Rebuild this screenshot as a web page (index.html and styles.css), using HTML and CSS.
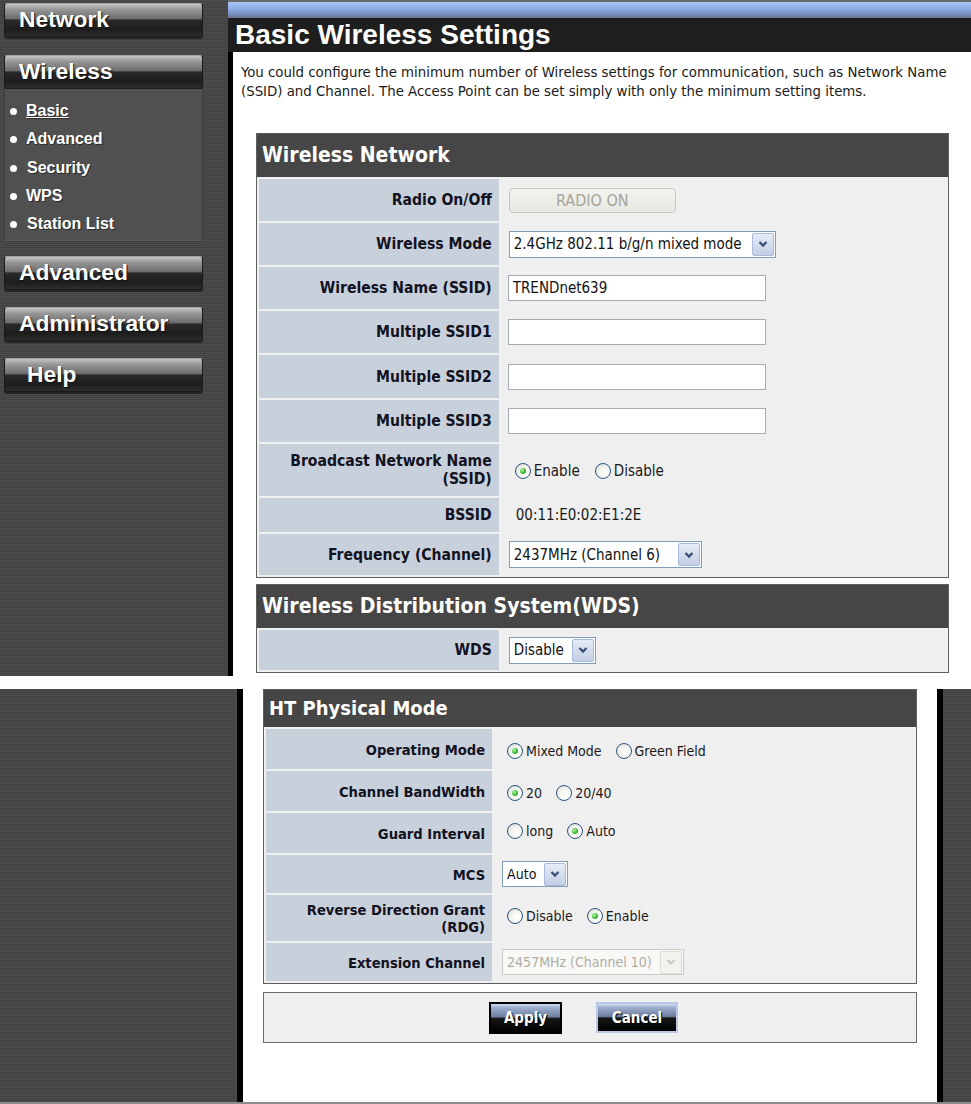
FILE: index.html
```html
<!DOCTYPE html>
<html>
<head>
<meta charset="utf-8">
<title>Basic Wireless Settings</title>
<link rel="stylesheet" href="styles.css">
</head>
<body>
<div class="screen screen-top">
  <nav class="sidebar stripes">
    <a class="navbtn">Network</a>
    <a class="navbtn gap-wireless">Wireless</a>
    <ul class="submenu">
      <li><a class="current">Basic</a></li>
      <li>Advanced</li>
      <li class="ind">Security</li>
      <li>WPS</li>
      <li class="ind">Station List</li>
    </ul>
    <a class="navbtn gap-adv">Advanced</a>
    <a class="navbtn gap-next">Administrator</a>
    <a class="navbtn gap-next help">Help</a>
  </nav>
  <main class="main">
    <div class="topbar"></div>
    <h1 class="title">Basic Wireless Settings</h1>
    <div class="content">
      <p class="intro">You could configure the minimum number of Wireless settings for communication, such as Network Name<br>(SSID) and Channel. The Access Point can be set simply with only the minimum setting items.</p>

      <section class="panel panel-wn">
        <h2 class="panel-head">Wireless Network</h2>
        <table class="form">
          <tr><th>Radio On/Off</th><td><span class="btn-disabled">RADIO ON</span></td></tr>
          <tr><th>Wireless Mode</th><td>
            <span class="select sel-mode"><span class="sel-text">2.4GHz 802.11 b/g/n mixed mode</span><span class="sel-btn"><svg width="10" height="8" viewBox="0 0 10 8"><path d="M1.5 2 L5 5.5 L8.5 2" fill="none" stroke="#3c4f74" stroke-width="2.4"/></svg></span></span>
          </td></tr>
          <tr><th>Wireless Name (SSID)</th><td><input class="text" type="text" value="TRENDnet639"></td></tr>
          <tr><th>Multiple SSID1</th><td><input class="text" type="text" value=""></td></tr>
          <tr class="r43"><th>Multiple SSID2</th><td><input class="text" type="text" value=""></td></tr>
          <tr><th>Multiple SSID3</th><td><input class="text" type="text" value=""></td></tr>
          <tr class="r52"><th>Broadcast Network Name<br>(SSID)</th><td>
            <span class="opts"><span class="opt"><span class="rd on"></span>Enable</span><span class="opt"><span class="rd"></span>Disable</span></span>
          </td></tr>
          <tr class="r34"><th>BSSID</th><td><span class="plain">00:11:E0:02:E1:2E</span></td></tr>
          <tr class="r41"><th>Frequency (Channel)</th><td>
            <span class="select sel-freq"><span class="sel-text">2437MHz (Channel 6)</span><span class="sel-btn"><svg width="10" height="8" viewBox="0 0 10 8"><path d="M1.5 2 L5 5.5 L8.5 2" fill="none" stroke="#3c4f74" stroke-width="2.4"/></svg></span></span>
          </td></tr>
        </table>
      </section>

      <section class="panel panel-wds">
        <h2 class="panel-head">Wireless Distribution System(WDS)</h2>
        <table class="form">
          <tr class="r40"><th>WDS</th><td>
            <span class="select sel-wds"><span class="sel-text">Disable</span><span class="sel-btn"><svg width="10" height="8" viewBox="0 0 10 8"><path d="M1.5 2 L5 5.5 L8.5 2" fill="none" stroke="#3c4f74" stroke-width="2.4"/></svg></span></span>
          </td></tr>
        </table>
      </section>
    </div>
  </main>
</div>

<div class="screen screen-bottom">
  <div class="sidebar-blank stripes"></div>
  <div class="content2">
    <section class="panel panel-ht">
      <h2 class="panel-head">HT Physical Mode</h2>
      <table class="form form-ht">
        <tr><th>Operating Mode</th><td><span class="opts"><span class="opt"><span class="rd on"></span>Mixed Mode</span><span class="opt"><span class="rd"></span>Green Field</span></span></td></tr>
        <tr><th>Channel BandWidth</th><td><span class="opts"><span class="opt"><span class="rd on"></span>20</span><span class="opt"><span class="rd"></span>20/40</span></span></td></tr>
        <tr><th>Guard Interval</th><td><span class="opts"><span class="opt"><span class="rd"></span>long</span><span class="opt"><span class="rd on"></span>Auto</span></span></td></tr>
        <tr class="r38"><th>MCS</th><td>
          <span class="select sel-mcs"><span class="sel-text">Auto</span><span class="sel-btn"><svg width="10" height="8" viewBox="0 0 10 8"><path d="M1.5 2 L5 5.5 L8.5 2" fill="none" stroke="#3c4f74" stroke-width="2.4"/></svg></span></span>
        </td></tr>
        <tr class="r46"><th>Reverse Direction Grant<br>(RDG)</th><td><span class="opts"><span class="opt"><span class="rd"></span>Disable</span><span class="opt"><span class="rd on"></span>Enable</span></span></td></tr>
        <tr class="r38"><th>Extension Channel</th><td>
          <span class="select sel-ext disabled"><span class="sel-text">2457MHz (Channel 10)</span><span class="sel-btn"><svg width="10" height="8" viewBox="0 0 10 8"><path d="M1.5 2 L5 5.5 L8.5 2" fill="none" stroke="#c8c8c0" stroke-width="2.2"/></svg></span></span>
        </td></tr>
      </table>
    </section>
    <div class="actions">
      <button class="btn btn-apply" type="button">Apply</button>
      <button class="btn btn-cancel" type="button">Cancel</button>
    </div>
  </div>
  <div class="rail stripes"></div>
</div>
</body>
</html>
```

FILE: styles.css
```css
* { box-sizing: border-box; }
html, body { margin: 0; padding: 0; background: #fff; }
body {
  width: 971px;
  height: 1104px;
  overflow: hidden;
  font-family: "DejaVu Sans Condensed", "DejaVu Sans", sans-serif;
  color: #161616;
}

.stripes {
  background: repeating-linear-gradient(to bottom, #4c4c4c 0, #4c4c4c 1px, #414141 1px, #414141 2px);
}

.screen { display: flex; }
.screen-top { height: 676px; }
.screen-bottom { height: 415px; margin-top: 13px; border-bottom: 2px solid #8c8c8c; }

/* ---------- sidebar ---------- */
.sidebar {
  width: 228px;
  flex: none;
  padding: 3px 0 0 4px;
  display: flex;
  flex-direction: column;
  align-items: flex-start;
}
.navbtn {
  display: block;
  width: 199px;
  height: 34px;
  flex: none;
  padding-left: 14px;
  border: 1px solid #1a1a1a;
  border-top-color: #a0a0a0;
  border-radius: 3px;
  background: linear-gradient(to bottom, #c4c4c4 0%, #959595 18%, #6c6c6c 46%, #2a2a2a 50%, #1d1d1d 80%, #2e2e2e 100%);
  box-shadow: 0 2px 0 #262626;
  font-family: "Liberation Sans", Arial, sans-serif;
  font-weight: bold;
  font-size: 22.8px;
  line-height: 31px;
  color: #fff;
  text-shadow: 1px 1px 1px #111;
}
.gap-wireless { margin-top: 18px; }
.gap-adv { margin-top: 15px; }
.gap-next { margin-top: 17px; }
.help { padding-left: 22px; }

.submenu {
  list-style: none;
  margin: 0;
  width: 199px;
  height: 152px;
  padding: 8px 0 0 21px;
  background: #505050;
  border-left: 1px solid #3c3c3c;
  border-right: 1px solid #3c3c3c;
  border-bottom: 1px solid #5a5a5a;
}
.submenu li {
  position: relative;
  height: 28.3px;
  line-height: 28px;
  font-family: "Liberation Sans", Arial, sans-serif;
  font-weight: bold;
  font-size: 16px;
  color: #fff;
  text-shadow: 1px 1px 0 #2a2a2a;
}
.submenu li.ind { padding-left: 1px; }
.submenu li::before {
  content: "";
  position: absolute;
  left: -16px;
  top: 11px;
  width: 7px;
  height: 7px;
  border-radius: 50%;
  background: #fff;
}
.submenu .current { text-decoration: underline; }

/* ---------- main top ---------- */
.main { flex: 1; display: flex; flex-direction: column; }
.topbar {
  height: 18px;
  border-top: 2px solid #6a6a6a;
  background: linear-gradient(to bottom, #a9c6f4 0%, #8fb0e6 40%, #7890c0 75%, #66748e 100%);
}
.title {
  margin: 0;
  height: 34px;
  background: #1e1e1e;
  padding-left: 7px;
  font-family: "Liberation Sans", Arial, sans-serif;
  font-weight: bold;
  font-size: 28px;
  line-height: 34px;
  color: #fff;
}
.content {
  flex: 1;
  border-left: 5px solid #000;
  background: #fff;
}
.intro {
  margin: 0;
  padding: 10px 8px 0;
  font-size: 14.8px;
  line-height: 19px;
  color: #1a1a1a;
  white-space: nowrap;
}

/* ---------- panels ---------- */
.panel {
  border: 1px solid #5e5e5e;
  background: #f0f0f0;
}
.panel-wn { margin: 33px 22px 0 23px; }
.panel-wds { margin: 6px 22px 0 23px; }
.panel-head {
  margin: 0;
  height: 43px;
  padding-left: 5px;
  background: #464646;
  font-size: 21px;
  font-weight: bold;
  line-height: 43px;
  color: #fff;
}

.form {
  width: 100%;
  border-collapse: separate;
  border-spacing: 2px;
}
.form tr { height: 42px; }
.form tr.r43 { height: 43px; }
.form tr.r41 { height: 41px; }
.form tr.r52 { height: 52px; }
.form tr.r34 { height: 34px; }
.form tr.r40 { height: 40px; }
.form th {
  width: 35%;
  background: #c8d0dc;
  text-align: right;
  padding: 0 7px 0 0;
  font-size: 15.6px;
  font-weight: bold;
  line-height: 18px;
  color: #121220;
}
.form td {
  background: #efefef;
  padding: 0 0 0 6px;
  font-size: 15px;
}

.btn-disabled {
  display: inline-block;
  width: 167px;
  height: 25px;
  margin-left: 2px;
  border: 1px solid #cac8be;
  border-radius: 4px;
  background: linear-gradient(to bottom, #f2f2ee, #e9e9e4);
  text-align: center;
  font-size: 16px;
  line-height: 23px;
  color: #a6a49a;
  vertical-align: middle;
}

.select {
  display: inline-flex;
  align-items: center;
  height: 27px;
  margin-left: 2px;
  border: 1px solid #7f9db9;
  background: #fff;
  vertical-align: middle;
}
.sel-text {
  flex: 1;
  padding-left: 4px;
  white-space: nowrap;
  overflow: hidden;
  font-size: 15px;
  color: #111;
}
.sel-btn {
  flex: none;
  width: 22px;
  height: 23px;
  margin-right: 1px;
  border: 1px solid #a9bbdb;
  border-radius: 2px;
  background: linear-gradient(to bottom, #e6ecf7, #c3cee4);
  display: flex;
  align-items: center;
  justify-content: center;
}
.sel-mode { width: 267px; }
.sel-freq { width: 193px; }
.sel-wds { width: 87px; }
.sel-mcs { width: 66px; height: 26px; }
.sel-ext { width: 182px; height: 26px; }
.select.disabled { border-color: #cbcbc4; background: #f8f8f6; }
.select.disabled .sel-text { color: #b0aea4; }
.select.disabled .sel-btn { border-color: #dcdcd6; background: #f2f2ee; }

.text {
  width: 258px;
  height: 26px;
  margin: 0 0 0 1px;
  padding: 0 4px;
  border: 1px solid #a3abb5;
  background: #fff;
  font-family: inherit;
  font-size: 15px;
  color: #111;
  vertical-align: middle;
}

.opts { display: inline-flex; align-items: center; margin-left: 8px; gap: 15px; }
.opt { display: inline-flex; align-items: center; gap: 3px; font-size: 15px; color: #1a1a1a; }
.rd {
  width: 16px;
  height: 16px;
  flex: none;
  border: 1px solid #2a5582;
  border-radius: 50%;
  background: radial-gradient(circle at 65% 65%, #ffffff 0, #f1f1ec 55%, #d6d6cf 100%);
  display: inline-flex;
  align-items: center;
  justify-content: center;
}
.rd.on::after {
  content: "";
  width: 6px;
  height: 6px;
  border-radius: 50%;
  background: radial-gradient(circle at 35% 35%, #b6f5ac 0, #3dbb35 55%, #1f8f1a 100%);
}
.plain { margin-left: 9px; font-size: 15px; color: #1a1a1a; }

/* ---------- bottom screen ---------- */
.sidebar-blank { width: 237px; flex: none; }
.content2 {
  width: 706px;
  flex: none;
  border-left: 6px solid #000;
  border-right: 6px solid #000;
  background: #fff;
}
.rail { flex: 1; }
.panel-ht { margin: 0 20px; }
.panel-ht .panel-head { height: 37px; line-height: 37px; font-size: 20px; }
.form-ht tr { height: 40px; }
.form-ht tr.r38 { height: 38px; }
.form-ht tr.r46 { height: 46px; }
.form-ht th { font-size: 14.6px; line-height: 17px; }
.form-ht td { padding-left: 6px; }
.form-ht .opts { margin-left: 7px; gap: 14px; }
.form-ht .opt { font-size: 14px; }
.form-ht .sel-text { font-size: 14px; }

.actions {
  margin: 8px 20px 0;
  height: 51px;
  border: 1px solid #6a6a6a;
  background: #efefef;
  display: flex;
  align-items: center;
  justify-content: center;
  gap: 34px;
  padding-right: 13px;
}
.btn {
  height: 32px;
  padding: 0;
  border: 2px solid #000;
  background: linear-gradient(to bottom, #d4def0 0%, #9fb0d0 12%, #6d7d9c 46%, #161616 52%, #000 100%);
  font-family: inherit;
  font-size: 15px;
  font-weight: bold;
  color: #fff;
  text-shadow: 1px 1px 0 #000;
}
.btn-apply { width: 73px; }
.btn-cancel { width: 82px; height: 31px; border-color: #b8c8e6; }
```
